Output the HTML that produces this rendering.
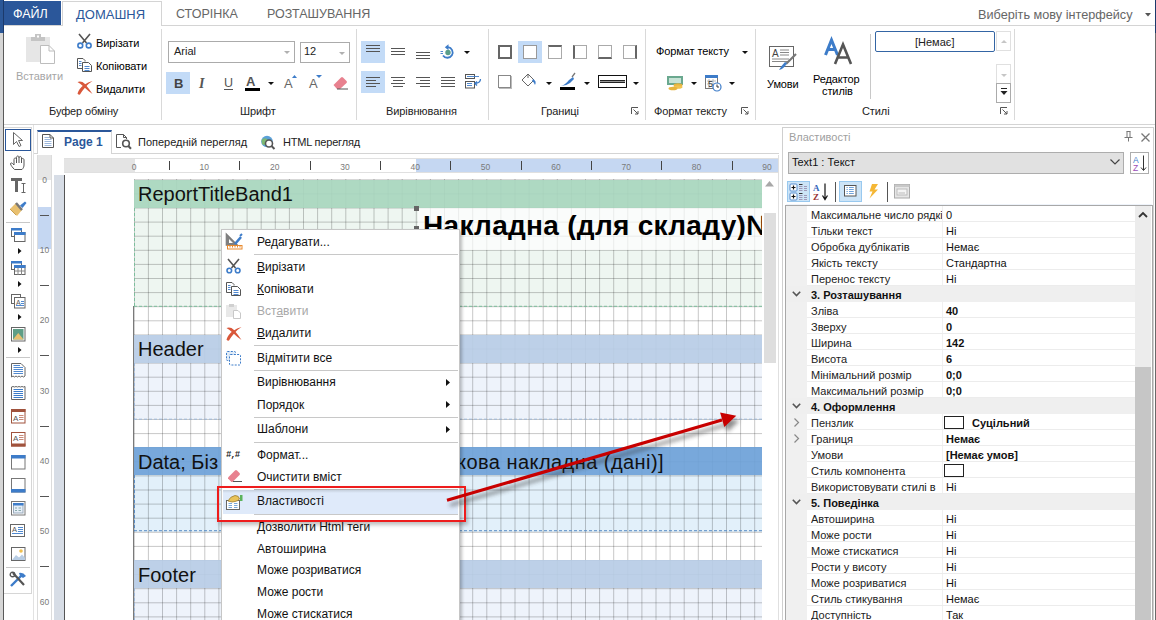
<!DOCTYPE html>
<html><head><meta charset="utf-8">
<style>
*{box-sizing:border-box;margin:0;padding:0}
html,body{width:1156px;height:620px;overflow:hidden;background:#fff;font-family:"Liberation Sans",sans-serif;font-size:12px;color:#222;position:relative}
.a{position:absolute}
.t{position:absolute;white-space:nowrap;line-height:1}
svg{position:absolute;overflow:visible}
.rl{font-size:11px;color:#222;letter-spacing:-0.1px}
.rb{font-size:11px;color:#000;letter-spacing:-0.1px}
.rul{font-size:8.5px;color:#7a7a7a}
.mi{position:absolute;left:257px;font-size:12px;color:#111;white-space:nowrap;line-height:1}
.ms{position:absolute;left:254px;width:204px;height:1px;background:#c8c8c8}
.pn{position:absolute;left:811px;font-size:11px;color:#222;white-space:nowrap;line-height:1}
.pv{position:absolute;left:946px;font-size:11px;color:#222;white-space:nowrap;line-height:1}
</style></head><body>
<!-- left/right edge strips -->
<div class="a" style="left:0;top:0;width:3px;height:33px;background:#2b5797"></div>
<div class="a" style="left:0;top:33px;width:3px;height:587px;background:#d6d6d6"></div>
<div class="a" style="left:3px;top:0;width:1px;height:33px;background:#1c3a6b"></div>
<div class="a" style="left:3px;top:33px;width:1px;height:587px;background:#5a5a5a"></div>
<div class="a" style="left:1155px;top:0;width:1px;height:33px;background:#1c3a6b"></div>
<div class="a" style="left:1155px;top:33px;width:1px;height:587px;background:#6a6a6a"></div>

<!-- TAB BAR -->
<div class="a" style="left:4px;top:1px;width:57px;height:24px;background:#2b579a"></div>
<div class="t" style="left:13px;top:8px;font-size:12.5px;color:#fff">ФАЙЛ</div>
<div class="a" style="left:62px;top:1px;width:100px;height:25px;background:#fff;border:1px solid #d4d4d4;border-bottom:none"></div>
<div class="t" style="left:76px;top:8px;font-size:13px;color:#2b579a">ДОМАШНЯ</div>
<div class="t" style="left:176px;top:8px;font-size:12.5px;color:#666">СТОРІНКА</div>
<div class="t" style="left:267px;top:8px;font-size:12.5px;color:#666">РОЗТАШУВАННЯ</div>
<div class="t" style="left:978px;top:9px;font-size:12.7px;color:#666">Виберіть мову інтерфейсу</div>
<svg style="left:1145px;top:13px" width="6" height="4"><path d="M0 0H6L3 3.5Z" fill="#555"/></svg>
<div class="a" style="left:4px;top:25px;width:58px;height:1px;background:#d4d4d4"></div>
<div class="a" style="left:162px;top:25px;width:993px;height:1px;background:#d4d4d4"></div>

<!-- RIBBON BOTTOM -->
<div class="a" style="left:4px;top:124px;width:1151px;height:1px;background:#d4d4d4"></div>

<!-- group separators -->
<div class="a" style="left:161px;top:29px;width:1px;height:91px;background:#d9d9d9"></div>
<div class="a" style="left:356px;top:29px;width:1px;height:91px;background:#d9d9d9"></div>
<div class="a" style="left:488px;top:29px;width:1px;height:91px;background:#d9d9d9"></div>
<div class="a" style="left:645px;top:29px;width:1px;height:91px;background:#d9d9d9"></div>
<div class="a" style="left:755px;top:29px;width:1px;height:91px;background:#d9d9d9"></div>
<div class="a" style="left:1014px;top:29px;width:1px;height:91px;background:#d9d9d9"></div>
<div class="a" style="left:870px;top:34px;width:1px;height:65px;background:#c8c8c8"></div>

<!-- group labels -->
<div class="rl t" style="left:49px;top:106px">Буфер обміну</div>
<div class="rl t" style="left:240px;top:106px">Шрифт</div>
<div class="rl t" style="left:386px;top:106px">Вирівнювання</div>
<div class="rl t" style="left:541px;top:106px">Границі</div>
<div class="rl t" style="left:654px;top:106px">Формат тексту</div>
<div class="rl t" style="left:862px;top:106px">Стилі</div>
<!-- launchers -->
<svg style="left:631px;top:107px" width="8" height="8"><path d="M0.5 7V0.5H7" stroke="#555" fill="none"/><path d="M2.5 2.5L7 7M7 4V7H4" stroke="#555" fill="none"/></svg>
<svg style="left:741px;top:107px" width="8" height="8"><path d="M0.5 7V0.5H7" stroke="#555" fill="none"/><path d="M2.5 2.5L7 7M7 4V7H4" stroke="#555" fill="none"/></svg>
<svg style="left:1000px;top:107px" width="8" height="8"><path d="M0.5 7V0.5H7" stroke="#555" fill="none"/><path d="M2.5 2.5L7 7M7 4V7H4" stroke="#555" fill="none"/></svg>

<!-- CLIPBOARD -->
<svg style="left:26px;top:34px" width="30" height="30">
 <rect x="0" y="3" width="24" height="25" fill="#e6e6e6"/>
 <rect x="5" y="3" width="14" height="4" fill="#c4c4c4"/>
 <rect x="9" y="0" width="6" height="4" fill="#c4c4c4"/><rect x="11" y="1.5" width="2" height="2" fill="#fff"/>
 <path d="M14.5 11.5H23L28.5 17V29.5H14.5Z" fill="#fff" stroke="#bdbdbd"/>
 <path d="M23 11.5V17H28.5" fill="none" stroke="#bdbdbd"/>
</svg>
<div class="t" style="left:16px;top:71px;font-size:11px;color:#a6a6a6">Вставити</div>
<svg style="left:77px;top:34px" width="15" height="15">
 <path d="M2 0L9.5 9M13 0L5.5 9" stroke="#555" stroke-width="1.6" fill="none"/>
 <circle cx="3.3" cy="11.5" r="2.4" fill="none" stroke="#3d7cc9" stroke-width="1.6"/>
 <circle cx="11.7" cy="11.5" r="2.4" fill="none" stroke="#3d7cc9" stroke-width="1.6"/>
</svg>
<div class="t rb" style="left:96px;top:38px">Вирізати</div>
<svg style="left:77px;top:58px" width="16" height="15">
 <path d="M0.5 0.5H6L8 2.5V3.5M0.5 0.5V10.5H5" fill="none" stroke="#555"/>
 <path d="M5.5 4.5H11.5L14.5 7.5V13.5H5.5Z" fill="#fff" stroke="#555"/>
 <path d="M2 3.5H4.5M2 5.5H4.5M2 7.5H4.5M7.5 8.5H12.5M7.5 10.5H12.5M7.5 12.5H12.5" stroke="#3d7cc9" stroke-width="0.9"/>
</svg>
<div class="t rb" style="left:96px;top:61px">Копіювати</div>
<svg style="left:77px;top:80px" width="16" height="15">
 <path d="M0.5 13.5Q2 8.5 7 5Q11 2 15.5 1Q11.5 3.5 8.5 7Q5 11 3 14.5Q1 15 0.5 13.5Z" fill="#d9573a"/>
 <path d="M0.5 2Q4.5 0.5 8 4Q11.5 8 15.5 14Q10.5 10.5 7 7Q4 4 0.5 2Z" fill="#d9573a"/>
</svg>
<div class="t rb" style="left:96px;top:84px">Видалити</div>

<!-- FONT -->
<div class="a" style="left:168px;top:41px;width:127px;height:22px;border:1px solid #ababab;background:#fff"></div>
<div class="t" style="left:174px;top:46px;font-size:11px;color:#222">Arial</div>
<svg style="left:284px;top:51px" width="6" height="4"><path d="M0 0H6L3 3Z" fill="#b0b0b0"/></svg>
<div class="a" style="left:300px;top:42px;width:50px;height:21px;border:1px solid #ababab;background:#fff"></div>
<div class="t" style="left:304px;top:46px;font-size:11px;color:#222">12</div>
<svg style="left:339px;top:52px" width="6" height="4"><path d="M0 0H6L3 3Z" fill="#b0b0b0"/></svg>

<div class="a" style="left:166px;top:72px;width:24px;height:22px;background:#c3dbf7"></div>
<div class="t" style="left:174px;top:77px;font-size:13px;font-weight:bold;color:#444">B</div>
<div class="t" style="left:199px;top:77px;font-size:14px;font-style:italic;font-family:'Liberation Serif';font-weight:bold;color:#555">I</div>
<div class="t" style="left:224px;top:77px;font-size:12.5px;color:#555">U</div>
<div class="a" style="left:224px;top:89px;width:9px;height:1px;background:#555"></div>
<div class="t" style="left:246px;top:75px;font-size:13px;font-weight:bold;color:#555">A</div>
<div class="a" style="left:245px;top:88px;width:15px;height:3px;background:#000"></div>
<svg style="left:268px;top:82px" width="6" height="3"><path d="M0 0H6L3 3Z" fill="#111"/></svg>
<div class="t" style="left:284px;top:77px;font-size:13px;color:#666">A</div>
<svg style="left:292px;top:75px" width="5" height="3"><path d="M0 3H5L2.5 0Z" fill="#3d7cc9"/></svg>
<div class="t" style="left:309px;top:77px;font-size:13px;color:#666">A</div>
<svg style="left:316px;top:75px" width="6" height="3"><path d="M0 0H6L3 3Z" fill="#3d7cc9"/></svg>
<svg style="left:333px;top:76px" width="16" height="14">
 <path d="M0.5 9L8 1.5Q9 0.5 10 1.5L13.5 5Q14.5 6 13.5 7L7 13H4Z" fill="#e8818f"/>
 <path d="M4 13H15" stroke="#555"/>
</svg>

<!-- ALIGNMENT -->
<div class="a" style="left:361px;top:41px;width:24px;height:22px;background:#c3dbf7"></div>
<svg style="left:366px;top:45px" width="15" height="8"><path d="M0 0.5H14M0 3.5H14M0 6.5H14" stroke="#555"/></svg>
<svg style="left:391px;top:48px" width="15" height="8"><path d="M0 0.5H14M0 3.5H14M0 6.5H14" stroke="#555"/></svg>
<svg style="left:416px;top:52px" width="15" height="8"><path d="M0 0.5H14M0 3.5H14M0 6.5H14" stroke="#555"/></svg>
<svg style="left:440px;top:44px" width="15" height="15">
 <path d="M8 3.2A5.3 5.3 0 1 1 3 11.5" fill="none" stroke="#3d7cc9" stroke-width="1.8"/>
 <path d="M8.5 0.3V6.2L4.8 3.2Z" fill="#3d7cc9"/>
 <circle cx="8" cy="8.5" r="2.7" fill="#5a9e8a"/>
 <path d="M0.5 7.5H3M0.5 9.5H3" stroke="#3d7cc9" stroke-width="0.9"/>
</svg>
<svg style="left:464px;top:51px" width="6" height="3"><path d="M0 0H6L3 3Z" fill="#111"/></svg>
<div class="a" style="left:361px;top:71px;width:24px;height:22px;background:#c3dbf7"></div>
<svg style="left:366px;top:77px" width="15" height="11"><path d="M0 0.5H14M0 3.5H10M0 6.5H14M0 9.5H10" stroke="#555"/></svg>
<svg style="left:391px;top:77px" width="15" height="11"><path d="M0 0.5H14M2 3.5H12M0 6.5H14M2 9.5H12" stroke="#555"/></svg>
<svg style="left:416px;top:77px" width="15" height="11"><path d="M0 0.5H14M4 3.5H14M0 6.5H14M4 9.5H14" stroke="#555"/></svg>
<svg style="left:441px;top:77px" width="15" height="11"><path d="M0 0.5H14M0 3.5H14M0 6.5H14M0 9.5H14" stroke="#555"/></svg>
<svg style="left:465px;top:74px" width="17" height="15">
 <rect x="0.5" y="0.5" width="9" height="4" fill="#fff" stroke="#555"/>
 <rect x="0.5" y="7.5" width="9" height="6.5" fill="#fff" stroke="#555"/>
 <path d="M2 2.5H14M2 9.5H7M2 11.5H7" stroke="#3d7cc9" stroke-width="0.9"/>
 <path d="M15.5 5Q15.5 9 10 9.5M12 7.5L10 9.5L12 11.5" fill="none" stroke="#3d7cc9" stroke-width="1.3"/>
</svg>

<!-- BORDERS -->
<div class="a" style="left:498px;top:45px;width:14px;height:14px;border:2px solid #666"></div>
<div class="a" style="left:518px;top:41px;width:24px;height:22px;background:#c3dbf7"></div>
<div class="a" style="left:523px;top:45px;width:14px;height:14px;border:1.5px solid #999;background:#fff"></div>
<div class="a" style="left:548px;top:45px;width:14px;height:14px;border:1px solid #aaa;border-top:2px solid #666"></div>
<div class="a" style="left:573px;top:45px;width:14px;height:14px;border:1px solid #aaa;border-left:2px solid #666"></div>
<div class="a" style="left:598px;top:45px;width:14px;height:14px;border:1px solid #aaa;border-bottom:2px solid #666"></div>
<div class="a" style="left:623px;top:45px;width:14px;height:14px;border:1px solid #aaa;border-right:2px solid #666"></div>
<div class="a" style="left:498px;top:75px;width:13px;height:13px;border:1px solid #888;box-shadow:1px 1px 0 #bbb"></div>
<svg style="left:521px;top:73px" width="16" height="14">
 <path d="M1 7L7 1L13 7L7 13Z" fill="#fff" stroke="#666"/>
 <path d="M7 1V5" stroke="#666"/>
 <path d="M12 6Q16 8 14 12Q13 9 11 8Z" fill="#3d7cc9"/>
</svg>
<svg style="left:546px;top:82px" width="6" height="3"><path d="M0 0H6L3 3Z" fill="#111"/></svg>
<svg style="left:560px;top:73px" width="16" height="17">
 <path d="M1 13Q5 12 9 7L13 4L14 6L10 10Q6 13 1 13Z" fill="#3d7cc9"/>
 <path d="M12 4L15 0" stroke="#777" stroke-width="1.3"/>
 <rect x="0" y="14" width="15" height="3" fill="#000"/>
</svg>
<svg style="left:584px;top:82px" width="6" height="3"><path d="M0 0H6L3 3Z" fill="#111"/></svg>
<div class="a" style="left:598px;top:75px;width:29px;height:13px;border:1.5px solid #111"></div>
<div class="a" style="left:600px;top:80px;width:25px;height:1px;background:#222"></div><div class="a" style="left:600px;top:82px;width:25px;height:1px;background:#222"></div><div class="a" style="left:600px;top:81px;width:25px;height:1px;background:#999"></div>
<svg style="left:633px;top:82px" width="6" height="3"><path d="M0 0H6L3 3Z" fill="#111"/></svg>

<!-- FORMAT TEXT -->
<div class="t rb" style="left:656px;top:46px">Формат тексту</div>
<svg style="left:742px;top:51px" width="6" height="3"><path d="M0 0H6L3 3Z" fill="#111"/></svg>
<svg style="left:667px;top:76px" width="17" height="15">
 <rect x="0" y="0" width="16" height="9" fill="#6aa88f"/>
 <rect x="2" y="2" width="12" height="5" fill="#c7e3d6"/>
 <ellipse cx="11" cy="9" rx="4.5" ry="1.8" fill="#e7b43f"/>
 <ellipse cx="11" cy="11" rx="4.5" ry="1.8" fill="#f0c350"/>
 <ellipse cx="6" cy="12.5" rx="4.5" ry="1.8" fill="#e7b43f"/>
</svg>
<svg style="left:691px;top:82px" width="6" height="3"><path d="M0 0H6L3 3Z" fill="#111"/></svg>
<svg style="left:705px;top:75px" width="17" height="17">
 <rect x="0.5" y="0.5" width="12" height="13" fill="#fff" stroke="#777"/>
 <rect x="0" y="0" width="13" height="3" fill="#3d7cc9"/>
 <path d="M2 6H11M2 9H11M4 4V13M8 4V13" stroke="#bbb"/>
 <text x="3" y="12" font-size="9" font-family="Liberation Sans" fill="#333">5</text>
 <circle cx="12" cy="12" r="4" fill="#fff" stroke="#3d7cc9" stroke-width="1.2"/>
 <path d="M12 9.5V12H14" stroke="#333" fill="none"/>
</svg>
<svg style="left:729px;top:82px" width="6" height="3"><path d="M0 0H6L3 3Z" fill="#111"/></svg>

<!-- STYLES -->
<svg style="left:769px;top:45px" width="28" height="26">
 <rect x="0.5" y="1.5" width="24" height="20" fill="#fff" stroke="#666"/>
 <text x="3" y="12" font-size="10" font-family="Liberation Sans" fill="#444">A</text>
 <path d="M11 5H20M11 7.5H20M11 10H20M3 14H20M3 16.5H20" stroke="#888"/>
 <path d="M27 9L17 19" stroke="#777" stroke-width="2.2"/>
 <path d="M18 18Q15 24 10 25Q13 20 16 17Z" fill="#3d7cc9"/>
</svg>
<div class="t rb" style="left:767px;top:79px">Умови</div>
<svg style="left:824px;top:38px" width="30" height="28">
 <path d="M1.5 17L7.5 2L13.5 17M4 11.5H11" fill="none" stroke="#3d7cc9" stroke-width="3"/>
 <path d="M11 26L19 6.5L27 26M14 19.5H24" fill="none" stroke="#555" stroke-width="2.6"/>
</svg>
<div class="t rb" style="left:813px;top:74px">Редактор</div>
<div class="t rb" style="left:822px;top:86px">стилів</div>
<div class="a" style="left:875px;top:31px;width:120px;height:21px;border:1.5px solid #3465a4;border-radius:2px;background:#fff"></div>
<div class="t" style="left:915px;top:37px;font-size:11px;color:#222">[Немає]</div>
<div class="a" style="left:996px;top:31px;width:15px;height:20px;border:1px solid #e0e0e0;background:#fff"></div>
<svg style="left:1001px;top:40px" width="6" height="3"><path d="M0 3H6L3 0Z" fill="#c6c6c6"/></svg>
<div class="a" style="left:996px;top:64px;width:15px;height:20px;border:1px solid #e0e0e0;border-bottom:none;background:#fff"></div>
<svg style="left:1001px;top:74px" width="6" height="3"><path d="M0 0H6L3 3Z" fill="#c6c6c6"/></svg>
<div class="a" style="left:996px;top:83px;width:15px;height:20px;border:1px solid #ababab;background:#fff"></div>
<svg style="left:1000px;top:88px" width="8" height="9"><path d="M1 0.5H7" stroke="#222"/><path d="M0.5 3H7.5L4 7Z" fill="#222"/></svg>

<div class="a" style="left:4px;top:127px;width:28px;height:467px;border:1px solid #d6d6d6;border-left:none;background:#fff"></div>
<div class="a" style="left:33px;top:125px;width:1px;height:495px;background:#e2e2e2"></div>
<div class="a" style="left:5px;top:129px;width:26px;height:22px;border:1.5px solid #2b579a;background:#fff"></div>
<div class="a" style="left:34px;top:153px;width:745px;height:1px;background:#d4d4d4"></div>
<div class="a" style="left:37px;top:130px;width:75px;height:24px;background:#fff;border:1px solid #d4d4d4;border-bottom:none;border-top:2px solid #2b579a"></div>
<div class="t" style="left:64px;top:136px;font-size:12px;font-weight:bold;color:#2b579a">Page 1</div>
<div class="t" style="left:138px;top:137px;font-size:11px;color:#222">Попередній перегляд</div>
<div class="t" style="left:283px;top:137px;font-size:11px;color:#222;letter-spacing:-0.2px">HTML перегляд</div>
<div class="a" style="left:37px;top:155px;width:15px;height:465px;border-left:1px solid #dcdcdc;border-right:1px solid #dcdcdc;background:#fff"></div>
<div class="a" style="left:38px;top:155px;width:13px;height:25px;background:#e6e6e6"></div>
<div class="a" style="left:38px;top:207px;width:13px;height:42px;background:#c5d7f2"></div>
<div class="t rul" style="left:38px;width:13px;text-align:center;top:175.5px">0</div>
<div class="a" style="left:40px;top:215px;width:9px;height:1px;background:#555"></div>
<div class="t rul" style="left:38px;width:13px;text-align:center;top:245.8px">10</div>
<div class="a" style="left:40px;top:285px;width:9px;height:1px;background:#555"></div>
<div class="t rul" style="left:38px;width:13px;text-align:center;top:316.2px">20</div>
<div class="a" style="left:40px;top:355px;width:9px;height:1px;background:#555"></div>
<div class="t rul" style="left:38px;width:13px;text-align:center;top:386.5px">30</div>
<div class="a" style="left:40px;top:426px;width:9px;height:1px;background:#555"></div>
<div class="t rul" style="left:38px;width:13px;text-align:center;top:456.8px">40</div>
<div class="a" style="left:40px;top:496px;width:9px;height:1px;background:#555"></div>
<div class="t rul" style="left:38px;width:13px;text-align:center;top:527.1px">50</div>
<div class="a" style="left:40px;top:566px;width:9px;height:1px;background:#555"></div>
<div class="t rul" style="left:38px;width:13px;text-align:center;top:597.5px">60</div>
<div class="a" style="left:40px;top:637px;width:9px;height:1px;background:#555"></div>
<div class="a" style="left:54px;top:175px;width:10px;height:445px;background:#d7dde6"></div>
<div class="a" style="left:64px;top:175px;width:1px;height:445px;background:#555"></div>
<div class="a" style="left:64px;top:158px;width:715px;height:15px;border-top:1px solid #e0e0e0;border-bottom:1px solid #e0e0e0;background:#fff"></div>
<div class="a" style="left:64px;top:159px;width:71px;height:13px;background:#e4e4e4"></div>
<div class="a" style="left:416px;top:159px;width:363px;height:13px;background:#c5d7f2"></div>
<div class="t rul" style="left:124.0px;width:20px;text-align:center;top:163px">0</div>
<div class="a" style="left:169px;top:161px;width:1px;height:9px;background:#444"></div>
<div class="t rul" style="left:194.3px;width:20px;text-align:center;top:163px">10</div>
<div class="a" style="left:239px;top:161px;width:1px;height:9px;background:#444"></div>
<div class="t rul" style="left:264.7px;width:20px;text-align:center;top:163px">20</div>
<div class="a" style="left:310px;top:161px;width:1px;height:9px;background:#444"></div>
<div class="t rul" style="left:335.0px;width:20px;text-align:center;top:163px">30</div>
<div class="a" style="left:380px;top:161px;width:1px;height:9px;background:#444"></div>
<div class="t rul" style="left:405.3px;width:20px;text-align:center;top:163px">40</div>
<div class="a" style="left:450px;top:161px;width:1px;height:9px;background:#444"></div>
<div class="t rul" style="left:475.6px;width:20px;text-align:center;top:163px">50</div>
<div class="a" style="left:521px;top:161px;width:1px;height:9px;background:#444"></div>
<div class="t rul" style="left:546.0px;width:20px;text-align:center;top:163px">60</div>
<div class="a" style="left:591px;top:161px;width:1px;height:9px;background:#444"></div>
<div class="t rul" style="left:616.3px;width:20px;text-align:center;top:163px">70</div>
<div class="a" style="left:661px;top:161px;width:1px;height:9px;background:#444"></div>
<div class="t rul" style="left:686.6px;width:20px;text-align:center;top:163px">80</div>
<div class="a" style="left:732px;top:161px;width:1px;height:9px;background:#444"></div>
<div class="t rul" style="left:757.0px;width:20px;text-align:center;top:163px">90</div>
<div class="a" style="left:134px;top:179px;width:628px;height:441px;background:#fff;overflow:hidden">
<div class="a" style="left:0;top:0.5px;width:628px;height:127.0px;background:#eef6f1"></div>
<div class="a" style="left:0;top:155.5px;width:628px;height:84.9px;background:#eef3fb"></div>
<div class="a" style="left:0;top:268.4px;width:628px;height:84.2px;background:#e2f0fa"></div>
<div class="a" style="left:0;top:381.0px;width:628px;height:80.0px;background:#eef3fb"></div>
<svg style="left:0;top:0" width="628" height="441"><path d="M0.30 0V441M14.40 0V441M28.50 0V441M42.60 0V441M56.70 0V441M70.80 0V441M84.90 0V441M99.00 0V441M113.10 0V441M127.20 0V441M141.30 0V441M155.40 0V441M169.50 0V441M183.60 0V441M197.70 0V441M211.80 0V441M225.90 0V441M240.00 0V441M254.10 0V441M268.20 0V441M282.30 0V441M296.40 0V441M310.50 0V441M324.60 0V441M338.70 0V441M352.80 0V441M366.90 0V441M381.00 0V441M395.10 0V441M409.20 0V441M423.30 0V441M437.40 0V441M451.50 0V441M465.60 0V441M479.70 0V441M493.80 0V441M507.90 0V441M522.00 0V441M536.10 0V441M550.20 0V441M564.30 0V441M578.40 0V441M592.50 0V441M606.60 0V441M620.70 0V441M0 0.80H628M0 14.90H628M0 29.00H628M0 43.10H628M0 57.20H628M0 71.30H628M0 85.40H628M0 99.50H628M0 113.60H628M0 127.70H628M0 141.80H628M0 155.90H628M0 170.00H628M0 184.10H628M0 198.20H628M0 212.30H628M0 226.40H628M0 240.50H628M0 254.60H628M0 268.70H628M0 282.80H628M0 296.90H628M0 311.00H628M0 325.10H628M0 339.20H628M0 353.30H628M0 367.40H628M0 381.50H628M0 395.60H628M0 409.70H628M0 423.80H628M0 437.90H628" stroke="#000" stroke-opacity="0.22" stroke-width="1" fill="none"/></svg>
<div class="a" style="left:0;top:0.5px;width:628px;height:28.2px;background:#a8d6be;opacity:0.92"></div>
<div class="a" style="left:0;top:155.5px;width:628px;height:28.2px;background:#b9cde6;opacity:0.92"></div>
<div class="a" style="left:0;top:268.4px;width:628px;height:28.0px;background:#6fa2d8;opacity:0.92"></div>
<div class="a" style="left:0;top:381.0px;width:628px;height:28.0px;background:#b9cde6;opacity:0.92"></div>
<svg style="left:0;top:28.7px" width="628" height="99.8"><path d="M0.5 0V98.8M0 98.3H628" stroke="#7dbf9d" stroke-dasharray="3 2" fill="none"/></svg>
<svg style="left:0;top:183.7px" width="628" height="57.7"><path d="M0.5 0V56.7M0 56.2H628" stroke="#9fb8d8" stroke-dasharray="3 2" fill="none"/></svg>
<svg style="left:0;top:296.4px" width="628" height="57.2"><path d="M0.5 0V56.2M0 55.7H628" stroke="#5b8ec6" stroke-dasharray="3 2" fill="none"/></svg>
<svg style="left:0;top:409.0px" width="628" height="53.0"><path d="M0.5 0V52.0M0 51.5H628" stroke="#9fb8d8" stroke-dasharray="3 2" fill="none"/></svg>
<div class="t" style="left:4px;top:5.0px;font-size:20px;color:#111">ReportTitleBand1</div>
<div class="t" style="left:4px;top:160.0px;font-size:20px;color:#111">Header</div>
<div class="t" style="left:4px;top:272.9px;font-size:20px;color:#111">Data; Біз</div>
<div class="t" style="left:4px;top:385.5px;font-size:20px;color:#111">Footer</div>
<div class="t" style="left:323.0px;top:273.4px;font-size:20px;color:#111;letter-spacing:0.45px">кова накладна (дані)]</div>
</div>
<div class="a" style="left:133px;top:306px;width:1px;height:314px;background:#7a7a7a"></div>
<div class="a" style="left:418px;top:208px;width:344px;height:42px;background:rgba(255,255,255,0.7)"></div>
<div class="t" style="left:423px;top:212px;font-size:28px;font-weight:bold;color:#000;width:339px;overflow:hidden;letter-spacing:0.3px">Накладна (для складу)№</div>
<div class="a" style="left:414px;top:206px;width:5px;height:5px;background:#666"></div>
<div class="a" style="left:414px;top:226px;width:5px;height:5px;background:#666"></div>
<div class="a" style="left:414px;top:247px;width:5px;height:5px;background:#666"></div>
<div class="a" style="left:763px;top:175px;width:15px;height:445px;background:#fff"></div>
<svg style="left:765px;top:181px" width="10" height="6"><path d="M0 5.5H9L4.5 0Z" fill="#a8a8a8"/></svg>
<div class="a" style="left:764px;top:213px;width:12px;height:150px;background:#dedede"></div>
<div class="a" style="left:778px;top:155px;width:1px;height:465px;background:#e0e0e0"></div>
<!-- TOOLBOX ICONS -->
<svg style="left:13px;top:132px" width="10" height="15"><path d="M0.5 0.5V12.5L3.5 9.5L6 14.5L8 13.5L5.5 8.5H9.5Z" fill="#fff" stroke="#666" stroke-linejoin="round"/></svg>
<svg style="left:10px;top:155px" width="17" height="15" viewBox="0 0 34 30"><path d="M9 29C5 25 2 21 1 18C0.5 16 3 15 5 17L8 20V9C8 5 13 5 13 9V5C13 1 18 1 18 5V6C18 2 23 2 23 6V10C23 6 28 6 28 10V20C28 23 27 26 24 29Z" fill="#fff" stroke="#555" stroke-width="2" stroke-linejoin="round"/><path d="M13 9V16M18 6V16M23 10V16" stroke="#555" stroke-width="2" fill="none"/></svg>
<svg style="left:11px;top:178px" width="16" height="16">
 <path d="M0 0H11V3H7V14H4V3H0Z" fill="#666"/>
 <path d="M10.5 5.5H14.5M12.5 5.5V14.5M10.5 14.5H14.5" stroke="#666" fill="none"/>
</svg>
<svg style="left:10px;top:202px" width="17" height="15">
 <path d="M0 7L6 1L12 8L7 14Z" fill="#e8c070"/>
 <path d="M6 1L12 8" stroke="#777" stroke-width="2.5"/>
 <path d="M10 3.5L15 -0.5L16.5 1L12.5 6Z" fill="#3d7cc9"/>
 <path d="M0 7L6 13" stroke="#c9a050"/>
</svg>
<div class="a" style="left:6px;top:222px;width:24px;height:1px;background:#c8c8c8"></div>
<svg style="left:11px;top:228px" width="15" height="15">
 <rect x="0.5" y="0.5" width="10" height="8" fill="#fff" stroke="#666"/><rect x="0" y="0" width="11" height="2.5" fill="#3d7cc9"/>
 <rect x="3.5" y="4.5" width="10.5" height="9" fill="#fff" stroke="#666"/><rect x="3" y="4" width="11.5" height="3" fill="#3d7cc9"/>
</svg>
<svg style="left:18px;top:248px" width="4" height="6"><path d="M0 0V6L3.5 3Z" fill="#111"/></svg>
<svg style="left:11px;top:261px" width="15" height="15">
 <rect x="0.5" y="0.5" width="10" height="8" fill="#fff" stroke="#666"/><rect x="0" y="0" width="11" height="2.5" fill="#3d7cc9"/>
 <rect x="3.5" y="4.5" width="10.5" height="9" fill="#fff" stroke="#666"/><rect x="3" y="4" width="11.5" height="3" fill="#3d7cc9"/>
 <path d="M4 10H14M7 7V14M10.5 7V14" stroke="#888"/>
</svg>
<svg style="left:18px;top:281px" width="4" height="6"><path d="M0 0V6L3.5 3Z" fill="#111"/></svg>
<svg style="left:11px;top:294px" width="15" height="15">
 <rect x="0.5" y="0.5" width="9" height="9" fill="#fff" stroke="#666"/>
 <rect x="3.5" y="3.5" width="10.5" height="10.5" fill="#fff" stroke="#666"/>
 <text x="5" y="11" font-size="7" font-family="Liberation Sans" fill="#555">A</text>
 <path d="M10 7.5H13M10 9.5H13M5 11.5H13" stroke="#3d7cc9" stroke-width="0.9"/>
</svg>
<svg style="left:18px;top:314px" width="4" height="6"><path d="M0 0V6L3.5 3Z" fill="#111"/></svg>
<svg style="left:11px;top:327px" width="15" height="15">
 <rect x="0.5" y="0.5" width="13.5" height="13.5" fill="#fff" stroke="#666"/>
 <rect x="2" y="2" width="10.5" height="10.5" fill="#5f9e86"/>
 <path d="M2 12.5L7.25 6L12.5 12.5Z" fill="#e8c070"/>
</svg>
<svg style="left:18px;top:347px" width="4" height="6"><path d="M0 0V6L3.5 3Z" fill="#111"/></svg>
<div class="a" style="left:6px;top:357px;width:24px;height:1px;background:#c8c8c8"></div>
<svg style="left:11px;top:363px" width="15" height="15">
 <path d="M0.5 0.5H10L14 4.5V13L12.5 14L11 13L9.5 14L8 13L6.5 14L5 13L3.5 14L2 13L0.5 14Z" fill="#fff" stroke="#666"/>
 <path d="M2.5 4.5H12M2.5 6.5H12M2.5 8.5H12M2.5 10.5H12M2.5 2.5H9" stroke="#3d7cc9" stroke-width="0.9"/>
</svg>
<svg style="left:11px;top:386px" width="15" height="15">
 <path d="M0.5 1L2 0.5L3.5 1L5 0.5L6.5 1L8 0.5L9.5 1L11 0.5L12.5 1L14 0.5V13.5H0.5Z" fill="#fff" stroke="#666"/>
 <path d="M2.5 3.5H12M2.5 5.5H12M2.5 7.5H12M2.5 9.5H12M2.5 11.5H12" stroke="#3d7cc9"/>
</svg>
<svg style="left:11px;top:409px" width="15" height="15">
 <rect x="0.5" y="0.5" width="13.5" height="13.5" fill="#fff" stroke="#a0523c"/>
 <rect x="0" y="0" width="14.5" height="3" fill="#a0523c"/>
 <text x="2" y="11.5" font-size="8" font-family="Liberation Sans" fill="#555">A</text>
 <path d="M8 6.5H12.5M8 8.5H12.5M8 10.5H12.5" stroke="#c98a78"/>
</svg>
<svg style="left:11px;top:432px" width="15" height="15">
 <rect x="0.5" y="0.5" width="13.5" height="13.5" fill="#fff" stroke="#a0523c"/>
 <rect x="0" y="11.5" width="14.5" height="3" fill="#a0523c"/>
 <text x="2" y="9" font-size="8" font-family="Liberation Sans" fill="#555">A</text>
 <path d="M8 3.5H12.5M8 5.5H12.5M8 7.5H12.5" stroke="#c98a78"/>
</svg>
<svg style="left:11px;top:455px" width="15" height="15">
 <rect x="0.5" y="0.5" width="13.5" height="13.5" fill="#fff" stroke="#777"/>
 <rect x="0" y="0" width="14.5" height="3.5" fill="#3d7cc9"/>
</svg>
<svg style="left:11px;top:478px" width="15" height="15">
 <rect x="0.5" y="0.5" width="13.5" height="13.5" fill="#fff" stroke="#777"/>
 <rect x="0" y="11" width="14.5" height="3.5" fill="#3d7cc9"/>
</svg>
<svg style="left:11px;top:501px" width="15" height="15">
 <rect x="0.5" y="0.5" width="13.5" height="13.5" fill="#fff" stroke="#777"/>
 <rect x="2.5" y="2.5" width="9.5" height="9.5" fill="#e6eef8" stroke="#9ab"/>
 <rect x="2" y="2" width="10.5" height="2.5" fill="#3d7cc9"/>
 <path d="M4 7H6M7.5 7H10M4 9.5H6M7.5 9.5H10" stroke="#8aa"/>
</svg>
<svg style="left:10px;top:524px" width="16" height="13">
 <rect x="0.5" y="0.5" width="14" height="12" fill="#fff" stroke="#666"/>
 <text x="2" y="8" font-size="7.5" font-family="Liberation Sans" fill="#555">A</text>
 <path d="M8 3.5H13M8 5.5H13M8 7.5H13M2 9.5H13" stroke="#3d7cc9" stroke-width="0.9"/>
</svg>
<svg style="left:11px;top:547px" width="15" height="14">
 <rect x="0.5" y="0.5" width="13.5" height="13" fill="#fff" stroke="#666"/>
 <path d="M1 13L5 8L8 10.5L11 7.5L14 11V13Z" fill="#b8cde4"/>
 <circle cx="10" cy="4" r="1.8" fill="#f0c050"/>
</svg>
<div class="a" style="left:6px;top:567px;width:24px;height:1px;background:#c8c8c8"></div>
<svg style="left:10px;top:572px" width="17" height="15">
 <path d="M1 14L12 3" stroke="#3d7cc9" stroke-width="2.4"/>
 <path d="M9 1Q13 0 16 4L13 6L10 4Z" fill="#3d7cc9"/>
 <path d="M3 1L14 13" stroke="#555" stroke-width="2.2"/>
 <circle cx="2.5" cy="2.5" r="2.3" fill="none" stroke="#555" stroke-width="1.4"/>
</svg>

<!-- page tab icons -->
<svg style="left:42px;top:134px" width="13" height="15">
 <path d="M0.5 0.5H8L11.5 4V13.5H0.5Z" fill="#fff" stroke="#555"/><path d="M8 0.5V4H11.5" fill="none" stroke="#555"/>
 <path d="M2.5 5.5H9.5M2.5 7.5H9.5M2.5 9.5H9.5M2.5 11.5H9.5M2.5 3.5H7" stroke="#9cb7dc"/>
</svg>
<svg style="left:116px;top:134px" width="16" height="16">
 <path d="M5 13.5H0.5V0.5H7.5L10.5 3.5V5" fill="none" stroke="#555"/><path d="M7.5 0.5V3.5H10.5" fill="none" stroke="#555"/>
 <circle cx="10" cy="9.5" r="3.3" fill="#fff" stroke="#555" stroke-width="1.6"/>
 <path d="M12.3 12L15 14.8" stroke="#555" stroke-width="2"/>
</svg>
<svg style="left:261px;top:135px" width="15" height="15">
 <circle cx="6" cy="6.5" r="5.8" fill="#5aa0d8"/>
 <path d="M0.5 5Q3 2 6 4Q8 6 5 9Q3 11 1 9Z" fill="#7cb874"/>
 <circle cx="8" cy="8.5" r="3.5" fill="#fff" stroke="#555" stroke-width="1.6"/>
 <path d="M10.5 11L13.5 14" stroke="#555" stroke-width="2"/>
</svg>

<div class="a" style="left:221px;top:229px;width:239px;height:400px;background:#fff;border:1px solid #c6c6c6;box-shadow:2px 2px 3px rgba(0,0,0,0.25)"></div>
<div class="a" style="left:223px;top:490px;width:235px;height:24px;background:#dfeafa"></div>
<div class="a" style="left:223px;top:490px;width:235px;height:3px;background:linear-gradient(#c5cfdc,#dfeafa)"></div>
<div class="a" style="left:254px;top:489px;width:204px;height:1px;background:#b4b4b4"></div>
<div class="ms" style="top:254px"></div>
<div class="ms" style="top:345px"></div>
<div class="ms" style="top:370px"></div>
<div class="ms" style="top:417px"></div>
<div class="ms" style="top:442px"></div>
<div class="ms" style="top:514px"></div>
<div class="mi" style="top:235.8px;color:#111">Редагувати...</div>
<div class="mi" style="top:261.1px;color:#111"><u>В</u>ирізати</div>
<div class="mi" style="top:282.8px;color:#111"><u>К</u>опіювати</div>
<div class="mi" style="top:305.1px;color:#a8a8a8">Вст<u>а</u>вити</div>
<div class="mi" style="top:327.1px;color:#111"><u>В</u>идалити</div>
<div class="mi" style="top:352.1px;color:#111">Ві<u>д</u>мітити все</div>
<div class="mi" style="top:375.9px;color:#111">Вирівнювання</div>
<svg style="left:446px;top:378.6px" width="4" height="7"><path d="M0 0V7L4 3.5Z" fill="#111"/></svg>
<div class="mi" style="top:398.5px;color:#111">Порядок</div>
<svg style="left:446px;top:401.2px" width="4" height="7"><path d="M0 0V7L4 3.5Z" fill="#111"/></svg>
<div class="mi" style="top:423.3px;color:#111">Шаблони</div>
<svg style="left:446px;top:426.0px" width="4" height="7"><path d="M0 0V7L4 3.5Z" fill="#111"/></svg>
<div class="mi" style="top:448.7px;color:#111">Формат...</div>
<div class="mi" style="top:470.6px;color:#111">Очистити вміст</div>
<div class="mi" style="top:495.1px;color:#111">Властивості</div>
<div class="mi" style="top:520.6px;color:#111">Дозволити Html теги</div>
<div class="mi" style="top:542.5px;color:#111">Автоширина</div>
<div class="mi" style="top:564.2px;color:#111">Може розриватися</div>
<div class="mi" style="top:586.1px;color:#111">Може рости</div>
<div class="mi" style="top:608.0px;color:#111">Може стискатися</div>

<!-- menu icons -->
<svg style="left:226px;top:234px" width="17" height="16">
 <path d="M0.5 0.5V11H11Z" fill="none" stroke="#777" stroke-width="1.6"/>
 <path d="M0 0L11 11H0Z" fill="#808080"/><path d="M3 5L7 9H3Z" fill="#fff"/>
 <path d="M9 10L15 3" stroke="#3d7cc9" stroke-width="2.6"/>
 <path d="M14 2L16 0" stroke="#3d7cc9" stroke-width="2"/>
 <rect x="1.5" y="11.5" width="14.5" height="3.5" fill="#fff" stroke="#e8892c"/>
 <path d="M4 12V13.5M6.5 12V13.5M9 12V13.5M11.5 12V13.5M14 12V13.5" stroke="#e8892c"/>
</svg>
<svg style="left:226px;top:259px" width="15" height="15">
 <path d="M2 0L9.5 9M13 0L5.5 9" stroke="#555" stroke-width="1.6" fill="none"/>
 <circle cx="3.3" cy="11.5" r="2.3" fill="none" stroke="#3d7cc9" stroke-width="1.6"/>
 <circle cx="11.7" cy="11.5" r="2.3" fill="none" stroke="#3d7cc9" stroke-width="1.6"/>
</svg>
<svg style="left:226px;top:282px" width="16" height="15">
 <path d="M0.5 0.5H6L8 2.5V3.5M0.5 0.5V10.5H5" fill="none" stroke="#555"/>
 <path d="M5.5 4.5H11.5L14.5 7.5V13.5H5.5Z" fill="#fff" stroke="#555"/>
 <path d="M2 3.5H4.5M2 5.5H4.5M2 7.5H4.5M7.5 8.5H12.5M7.5 10.5H12.5M7.5 12.5H12.5" stroke="#3d7cc9" stroke-width="0.9"/>
</svg>
<svg style="left:226px;top:303px" width="16" height="16">
 <rect x="0" y="2" width="11" height="12" fill="#e8e8e8"/>
 <rect x="3" y="1" width="5" height="3" fill="#d0d0d0"/>
 <path d="M7.5 7.5H12L14.5 10V15.5H7.5Z" fill="#fff" stroke="#c8c8c8"/>
</svg>
<svg style="left:226px;top:326px" width="16" height="15">
 <path d="M0.5 13.5Q2 8.5 7 5Q11 2 15.5 1Q11.5 3.5 8.5 7Q5 11 3 14.5Q1 15 0.5 13.5Z" fill="#d9573a"/>
 <path d="M0.5 2Q4.5 0.5 8 4Q11.5 8 15.5 14Q10.5 10.5 7 7Q4 4 0.5 2Z" fill="#d9573a"/>
</svg>
<svg style="left:226px;top:351px" width="16" height="15">
 <rect x="0.5" y="0.5" width="9" height="9" rx="1" fill="#e0ecf8" stroke="#3d7cc9" stroke-dasharray="2 1.3"/>
 <rect x="3.5" y="3.5" width="11" height="10.5" rx="1" fill="#fff" stroke="#3d7cc9" stroke-dasharray="2 1.3"/>
</svg>
<div class="t" style="left:226px;top:451px;font-size:9px;color:#222;letter-spacing:-1px;font-family:'Liberation Mono';font-weight:bold">#,#</div>
<svg style="left:227px;top:469px" width="16" height="14">
 <path d="M1 8.5L8 1.5Q9 0.5 10 1.5L12.5 4Q13.5 5 12.5 6L6 12.5Q5 13.5 4 12.5L1 9.5Z" fill="#e8818f"/>
 <path d="M6 12.5H15" stroke="#555"/>
</svg>
<svg style="left:226px;top:495px" width="17" height="15">
 <rect x="0.5" y="5.5" width="13" height="9" fill="#fff" stroke="#666"/>
 <path d="M2.5 8.5H6M8 8.5H11.5M2.5 10.5H6M8 10.5H11.5M2.5 12.5H6M8 12.5H11.5" stroke="#6a9fd8" stroke-width="0.9"/>
 <path d="M2 6Q4 1.5 9 0.5Q13 0.5 13.5 4Q12 6 9 6.5L6 7Z" fill="#e9c35a" stroke="#9a7b30" stroke-width="0.8"/>
 <rect x="14" y="0" width="2.5" height="6" fill="#5bb35b"/>
</svg>

<!-- red rectangle + arrow -->
<div class="a" style="left:217px;top:486px;width:249px;height:36px;border:2px solid #ee1c1c;box-shadow:2px 3px 4px rgba(0,0,0,0.25)"></div>
<svg style="left:0;top:0" width="1156" height="620">
 <defs><filter id="sh" x="-20%" y="-50%" width="140%" height="200%"><feGaussianBlur stdDeviation="2.2"/></filter></defs>
 <g transform="translate(3,5)" filter="url(#sh)" opacity="0.55">
  <path d="M447 500.3L722 420" stroke="#333" stroke-width="3.2"/>
  <path d="M736.3 415.7L720.1 412.4L724.3 427Z" fill="#333"/>
 </g>
 <path d="M447 500.3L722 420" stroke="#c80000" stroke-width="3.2"/>
 <path d="M736.3 415.7L720.1 412.4L724.3 427Z" fill="#c80000"/>
</svg>

<div class="a" style="left:779px;top:125px;width:376px;height:495px;background:#fff"></div>
<div class="a" style="left:782px;top:127px;width:372px;height:493px;border:1px solid #cfcfcf;border-bottom:none;background:#fff"></div>
<div class="t" style="left:789px;top:132px;font-size:11px;color:#a0a0a0">Властивості</div>
<svg style="left:1124px;top:131px" width="9" height="11"><path d="M2.5 0.5H6.5M3 0.5V6M6 0.5V6M0.5 6.5H8.5M4.5 6.5V10.5" stroke="#777" fill="none"/></svg>
<svg style="left:1141px;top:133px" width="9" height="9"><path d="M0.5 0.5L8.5 8.5M8.5 0.5L0.5 8.5" stroke="#777" stroke-width="1.3"/></svg>
<div class="a" style="left:788px;top:152px;width:336px;height:22px;background:#e1e1e1;border:1px solid #adadad"></div>
<div class="t" style="left:792px;top:157px;font-size:11px;color:#111">Text1 : Текст</div>
<svg style="left:1110px;top:159px" width="10" height="6"><path d="M0.5 0.5L5 5L9.5 0.5" stroke="#444" stroke-width="1.2" fill="none"/></svg>
<div class="a" style="left:1130px;top:152px;width:19px;height:22px;background:#fff;border:1px solid #adadad"></div>
<svg style="left:1133px;top:155px" width="14" height="17"><text x="0" y="7.5" font-size="8.5" font-family="Liberation Sans" fill="#3d7cc9">A</text><text x="0" y="15.5" font-size="8.5" font-family="Liberation Sans" fill="#9b4fb8">Z</text><path d="M10.5 0.5V15M8 12.5L10.5 15.5L13 12.5" stroke="#333" fill="none"/></svg>
<div class="a" style="left:787px;top:181px;width:23px;height:21px;background:#cce4f7;border:1px solid #99c9ef"></div>
<svg style="left:789px;top:183px" width="20" height="18"><rect x="1" y="1" width="7" height="7" rx="1" fill="#fff" stroke="#5a8fd0"/><path d="M2.5 4.5H6.5M4.5 2.5V6.5" stroke="#111" stroke-width="1.2"/><rect x="1" y="10" width="7" height="7" rx="1" fill="#fff" stroke="#5a8fd0"/><path d="M2.5 13.5H6.5M4.5 11.5V15.5" stroke="#111" stroke-width="1.2"/><path d="M10 1.5H13.5M10 10.5H13.5" stroke="#333" stroke-width="1"/><path d="M10 3.5H13.5M15 3.5H18M10 5.5H13.5M15 5.5H18M10 7.5H13.5M15 7.5H18M10 12.5H13.5M15 12.5H18M10 14.5H13.5M15 14.5H18M10 16.5H13.5M15 16.5H18" stroke="#9a8fb0" stroke-width="0.9"/></svg>
<svg style="left:813px;top:183px" width="16" height="18"><text x="0" y="8" font-size="9" font-weight="bold" font-family="Liberation Serif" fill="#3366bb">A</text><text x="0" y="16.5" font-size="9" font-weight="bold" font-family="Liberation Serif" fill="#993333">Z</text><path d="M12 0.5V15.5M9.5 12.5L12 16.5L14.5 12.5" stroke="#111" stroke-width="1.2" fill="none"/></svg>
<div class="a" style="left:835px;top:182px;width:1px;height:20px;background:#555"></div>
<div class="a" style="left:839px;top:181px;width:23px;height:21px;background:#cce4f7;border:1px solid #99c9ef"></div>
<svg style="left:844px;top:185px" width="13" height="12"><rect x="0.5" y="0.5" width="11.5" height="10.5" fill="#fff" stroke="#555"/><path d="M2.5 2.5H3.8M5 2.5H9.8M2.5 4.5H3.8M5 4.5H9.8M2.5 6.5H3.8M5 6.5H9.8M2.5 8.5H3.8M5 8.5H9.8" stroke="#4a8ad0" stroke-width="0.8"/></svg>
<svg style="left:868px;top:184px" width="11" height="15"><path d="M4 0H10L6.5 5.5H10L1.5 14.5L4.5 7.5H1.5Z" fill="#f5b735"/></svg>
<div class="a" style="left:887px;top:182px;width:1px;height:20px;background:#555"></div>
<svg style="left:894px;top:184px" width="17" height="15"><rect x="0.5" y="0.5" width="15" height="13.5" fill="#e6e6e6" stroke="#aaa"/><rect x="0.5" y="0.5" width="15" height="2.5" fill="#c8c8c8"/><rect x="3" y="5" width="10" height="6" fill="#f4f4f4" stroke="#bbb"/><path d="M4.5 9H11" stroke="#bbb"/></svg>
<div class="a" style="left:786px;top:204px;width:366px;height:1px;background:#eef3fa"></div>
<div class="a" style="left:785px;top:205px;width:368px;height:415px;border:1px solid #a8a8a8;border-bottom:none;background:#fff"></div>
<div class="a" style="left:786px;top:206px;width:21px;height:414px;background:#f0f0f0"></div>
<div class="a" style="left:942px;top:206px;width:1px;height:414px;background:#f0f0f0"></div>
<div class="a" style="left:807px;top:221px;width:328px;height:1px;background:#ececec"></div>
<div class="pn" style="top:209.9px;width:131px;overflow:hidden">Максимальне число рядкі</div>
<div class="pv" style="top:209.9px;font-weight:normal;color:#111">0</div>
<div class="a" style="left:807px;top:237px;width:328px;height:1px;background:#ececec"></div>
<div class="pn" style="top:225.9px;width:131px;overflow:hidden">Тільки текст</div>
<div class="pv" style="top:225.9px;font-weight:normal;color:#111">Ні</div>
<div class="a" style="left:807px;top:253px;width:328px;height:1px;background:#ececec"></div>
<div class="pn" style="top:241.9px;width:131px;overflow:hidden">Обробка дублікатів</div>
<div class="pv" style="top:241.9px;font-weight:normal;color:#111">Немає</div>
<div class="a" style="left:807px;top:269px;width:328px;height:1px;background:#ececec"></div>
<div class="pn" style="top:257.9px;width:131px;overflow:hidden">Якість тексту</div>
<div class="pv" style="top:257.9px;font-weight:normal;color:#111">Стандартна</div>
<div class="a" style="left:807px;top:285px;width:328px;height:1px;background:#ececec"></div>
<div class="pn" style="top:273.9px;width:131px;overflow:hidden">Перенос тексту</div>
<div class="pv" style="top:273.9px;font-weight:normal;color:#111">Ні</div>
<div class="a" style="left:786px;top:286px;width:349px;height:16px;background:#efefef"></div>
<svg style="left:792px;top:291px" width="9" height="6"><path d="M0.8 0.8L4.5 4.5L8.2 0.8" stroke="#555" stroke-width="1.6" fill="none"/></svg>
<div class="pn" style="top:289.9px;font-weight:bold;color:#111">3. Розташування</div>
<div class="a" style="left:807px;top:317px;width:328px;height:1px;background:#ececec"></div>
<div class="pn" style="top:305.9px;width:131px;overflow:hidden">Зліва</div>
<div class="pv" style="top:305.9px;font-weight:bold;color:#111">40</div>
<div class="a" style="left:807px;top:333px;width:328px;height:1px;background:#ececec"></div>
<div class="pn" style="top:321.9px;width:131px;overflow:hidden">Зверху</div>
<div class="pv" style="top:321.9px;font-weight:bold;color:#111">0</div>
<div class="a" style="left:807px;top:349px;width:328px;height:1px;background:#ececec"></div>
<div class="pn" style="top:337.9px;width:131px;overflow:hidden">Ширина</div>
<div class="pv" style="top:337.9px;font-weight:bold;color:#111">142</div>
<div class="a" style="left:807px;top:365px;width:328px;height:1px;background:#ececec"></div>
<div class="pn" style="top:353.9px;width:131px;overflow:hidden">Висота</div>
<div class="pv" style="top:353.9px;font-weight:bold;color:#111">6</div>
<div class="a" style="left:807px;top:381px;width:328px;height:1px;background:#ececec"></div>
<div class="pn" style="top:369.9px;width:131px;overflow:hidden">Мінімальний розмір</div>
<div class="pv" style="top:369.9px;font-weight:bold;color:#111">0;0</div>
<div class="a" style="left:807px;top:397px;width:328px;height:1px;background:#ececec"></div>
<div class="pn" style="top:385.9px;width:131px;overflow:hidden">Максимальний розмір</div>
<div class="pv" style="top:385.9px;font-weight:bold;color:#111">0;0</div>
<div class="a" style="left:786px;top:398px;width:349px;height:16px;background:#efefef"></div>
<svg style="left:792px;top:403px" width="9" height="6"><path d="M0.8 0.8L4.5 4.5L8.2 0.8" stroke="#555" stroke-width="1.6" fill="none"/></svg>
<div class="pn" style="top:401.9px;font-weight:bold;color:#111">4. Оформлення</div>
<div class="a" style="left:807px;top:429px;width:328px;height:1px;background:#ececec"></div>
<svg style="left:794px;top:418px" width="5" height="9"><path d="M0.5 0.5L4.5 4.5L0.5 8.5" stroke="#888" stroke-width="1.2" fill="none"/></svg>
<div class="pn" style="top:417.9px;width:131px;overflow:hidden">Пензлик</div>
<div class="a" style="left:944px;top:416px;width:20px;height:13px;border:1px solid #222;background:#fff"></div>
<div class="pv" style="left:972px;top:417.9px;font-weight:bold;color:#111">Суцільний</div>
<div class="a" style="left:807px;top:445px;width:328px;height:1px;background:#ececec"></div>
<svg style="left:794px;top:434px" width="5" height="9"><path d="M0.5 0.5L4.5 4.5L0.5 8.5" stroke="#888" stroke-width="1.2" fill="none"/></svg>
<div class="pn" style="top:433.9px;width:131px;overflow:hidden">Границя</div>
<div class="pv" style="top:433.9px;font-weight:bold;color:#111">Немає</div>
<div class="a" style="left:807px;top:461px;width:328px;height:1px;background:#ececec"></div>
<div class="pn" style="top:449.9px;width:131px;overflow:hidden">Умови</div>
<div class="pv" style="top:449.9px;font-weight:bold;color:#111">[Немає умов]</div>
<div class="a" style="left:807px;top:477px;width:328px;height:1px;background:#ececec"></div>
<div class="pn" style="top:465.9px;width:131px;overflow:hidden">Стиль компонента</div>
<div class="a" style="left:944px;top:464px;width:20px;height:13px;border:1px solid #222;background:#fff"></div>
<div class="a" style="left:807px;top:493px;width:328px;height:1px;background:#ececec"></div>
<div class="pn" style="top:481.9px;width:131px;overflow:hidden">Використовувати стилі в</div>
<div class="pv" style="top:481.9px;font-weight:normal;color:#111">Ні</div>
<div class="a" style="left:786px;top:494px;width:349px;height:16px;background:#efefef"></div>
<svg style="left:792px;top:499px" width="9" height="6"><path d="M0.8 0.8L4.5 4.5L8.2 0.8" stroke="#555" stroke-width="1.6" fill="none"/></svg>
<div class="pn" style="top:497.9px;font-weight:bold;color:#111">5. Поведінка</div>
<div class="a" style="left:807px;top:525px;width:328px;height:1px;background:#ececec"></div>
<div class="pn" style="top:513.9px;width:131px;overflow:hidden">Автоширина</div>
<div class="pv" style="top:513.9px;font-weight:normal;color:#111">Ні</div>
<div class="a" style="left:807px;top:541px;width:328px;height:1px;background:#ececec"></div>
<div class="pn" style="top:529.9px;width:131px;overflow:hidden">Може рости</div>
<div class="pv" style="top:529.9px;font-weight:normal;color:#111">Ні</div>
<div class="a" style="left:807px;top:557px;width:328px;height:1px;background:#ececec"></div>
<div class="pn" style="top:545.9px;width:131px;overflow:hidden">Може стискатися</div>
<div class="pv" style="top:545.9px;font-weight:normal;color:#111">Ні</div>
<div class="a" style="left:807px;top:573px;width:328px;height:1px;background:#ececec"></div>
<div class="pn" style="top:561.9px;width:131px;overflow:hidden">Рости у висоту</div>
<div class="pv" style="top:561.9px;font-weight:normal;color:#111">Ні</div>
<div class="a" style="left:807px;top:589px;width:328px;height:1px;background:#ececec"></div>
<div class="pn" style="top:577.9px;width:131px;overflow:hidden">Може розриватися</div>
<div class="pv" style="top:577.9px;font-weight:normal;color:#111">Ні</div>
<div class="a" style="left:807px;top:605px;width:328px;height:1px;background:#ececec"></div>
<div class="pn" style="top:593.9px;width:131px;overflow:hidden">Стиль стикування</div>
<div class="pv" style="top:593.9px;font-weight:normal;color:#111">Немає</div>
<div class="a" style="left:807px;top:621px;width:328px;height:1px;background:#ececec"></div>
<div class="pn" style="top:609.9px;width:131px;overflow:hidden">Доступність</div>
<div class="pv" style="top:609.9px;font-weight:normal;color:#111">Так</div>
<div class="a" style="left:1135px;top:206px;width:16px;height:414px;background:#ececec"></div>
<svg style="left:1138px;top:212px" width="10" height="6"><path d="M1 5L5 1L9 5" stroke="#333" stroke-width="1.8" fill="none"/></svg>
<div class="a" style="left:1135px;top:367px;width:16px;height:253px;background:#c6c6c6"></div>
</body></html>
